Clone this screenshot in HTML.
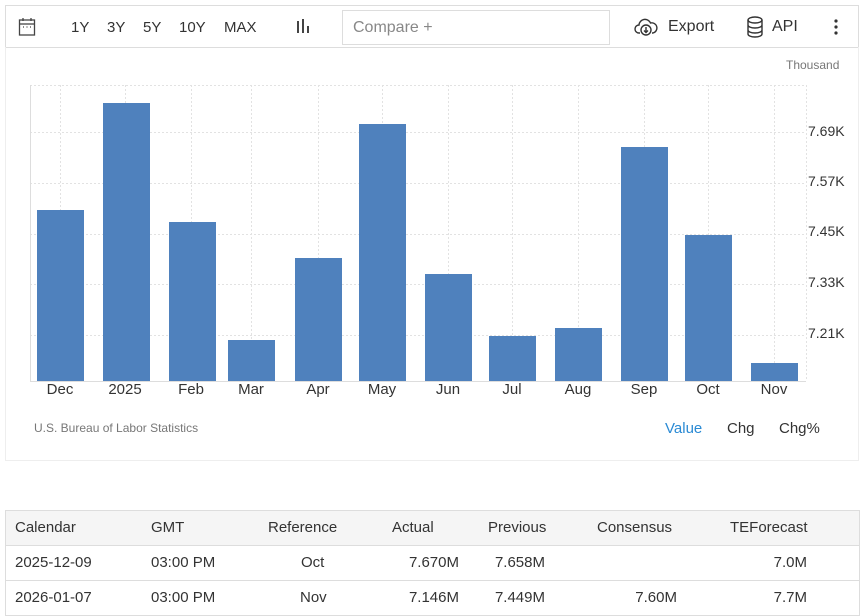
<!DOCTYPE html>
<html><head><meta charset="utf-8"><style>
*{box-sizing:border-box;margin:0;padding:0}
body{width:862px;height:616px;background:#fff;font-family:"Liberation Sans",Arial,sans-serif;position:relative;overflow:hidden;color:#333}
.abs{position:absolute}
.tb{left:5px;top:5px;width:854px;height:43px;border:1px solid #ddd;background:#fff}
.tb span{position:absolute;top:13px;font-size:15px;color:#333}
.card{left:5px;top:47px;width:854px;height:414px;border:1px solid #eee;border-top:none}
.bar{position:absolute;background:#4f81bd;width:47px}
.xl{position:absolute;top:381px;font-size:15px;color:#333;width:60px;text-align:center}
.yl{position:absolute;left:808px;font-size:14px;color:#333}
.row{position:absolute;left:5px;width:855px;height:36px;border:1px solid #ddd;font-size:15px;color:#333}
.row div{position:absolute;top:8px}
.r{text-align:right}
</style></head><body>
<div class="abs tb">
<svg class="abs" style="left:12px;top:11px" width="18" height="20" viewBox="0 0 18 20" fill="none" stroke="#444" stroke-width="1.3"><rect x="1.5" y="3" width="15" height="15"/><line x1="1.5" y1="7" x2="16.5" y2="7"/><line x1="5" y1="1" x2="5" y2="4"/><line x1="13" y1="1" x2="13" y2="4"/><line x1="5" y1="10" x2="6" y2="10"/><line x1="8.5" y1="10" x2="9.5" y2="10"/><line x1="12" y1="10" x2="13" y2="10"/></svg>
<span style="left:65px">1Y</span><span style="left:101px">3Y</span><span style="left:137px">5Y</span><span style="left:173px">10Y</span><span style="left:218px">MAX</span>
<svg class="abs" style="left:289px;top:12px" width="16" height="16" viewBox="0 0 16 16" stroke="#444" stroke-width="2"><line x1="3" y1="3" x2="3" y2="15"/><line x1="8" y1="1" x2="8" y2="15"/><line x1="13" y1="8" x2="13" y2="15"/></svg>
<div class="abs" style="left:336px;top:4px;width:268px;height:35px;border:1px solid #ddd"></div>
<span style="left:347px;color:#888;font-size:16px;top:13px">Compare +</span>
<svg class="abs" style="left:628px;top:10px" width="24" height="22" viewBox="0 0 24 22" fill="none" stroke="#333" stroke-width="1.4"><path d="M6 17H5a4 4 0 0 1 0-8 6 6 0 0 1 11.5-2A4.5 4.5 0 0 1 19 17h-1"/><circle cx="12" cy="14" r="5"/><path d="M12 11v5M10 14.5l2 2 2-2"/></svg>
<span style="left:662px;font-size:16px;top:12px">Export</span>
<svg class="abs" style="left:740px;top:10px" width="18" height="22" viewBox="0 0 18 22" fill="none" stroke="#333" stroke-width="1.4"><ellipse cx="9" cy="4" rx="7" ry="3"/><path d="M2 4v14c0 1.7 3 3 7 3s7-1.3 7-3V4M2 9c0 1.7 3 3 7 3s7-1.3 7-3M2 14c0 1.7 3 3 7 3s7-1.3 7-3"/></svg>
<span style="left:766px;font-size:16px;top:12px">API</span>
<svg class="abs" style="left:828px;top:13px" width="4" height="16"><circle cx="2" cy="2" r="1.6" fill="#333"/><circle cx="2" cy="8" r="1.6" fill="#333"/><circle cx="2" cy="14" r="1.6" fill="#333"/></svg>
</div>
<div class="abs card"></div>
<div class="abs" style="left:786px;top:58px;font-size:12px;color:#777">Thousand</div>
<svg class="abs" style="left:0;top:0" width="862" height="400">
<g stroke="#e2e2e2" stroke-dasharray="2,2" stroke-width="1">
<line x1="30" y1="85.5" x2="806" y2="85.5"/><line x1="30" y1="132.5" x2="806" y2="132.5"/><line x1="30" y1="183.5" x2="806" y2="183.5"/><line x1="30" y1="234.5" x2="806" y2="234.5"/><line x1="30" y1="284.5" x2="806" y2="284.5"/><line x1="30" y1="335.5" x2="806" y2="335.5"/>
<line x1="60.5" y1="85" x2="60.5" y2="381"/><line x1="125.5" y1="85" x2="125.5" y2="381"/><line x1="191.5" y1="85" x2="191.5" y2="381"/><line x1="251.5" y1="85" x2="251.5" y2="381"/><line x1="318.5" y1="85" x2="318.5" y2="381"/><line x1="382.5" y1="85" x2="382.5" y2="381"/><line x1="448.5" y1="85" x2="448.5" y2="381"/><line x1="512.5" y1="85" x2="512.5" y2="381"/><line x1="578.5" y1="85" x2="578.5" y2="381"/><line x1="644.5" y1="85" x2="644.5" y2="381"/><line x1="708.5" y1="85" x2="708.5" y2="381"/><line x1="774.5" y1="85" x2="774.5" y2="381"/><line x1="806.5" y1="85" x2="806.5" y2="381"/>
</g>
<line x1="30.5" y1="85" x2="30.5" y2="381" stroke="#ddd"/>
<line x1="30" y1="381.5" x2="806" y2="381.5" stroke="#ddd"/>
</svg>
<div class="bar" style="left:37px;top:210px;height:171px"></div>
<div class="bar" style="left:103px;top:103px;height:278px"></div>
<div class="bar" style="left:169px;top:222px;height:159px"></div>
<div class="bar" style="left:228px;top:340px;height:41px"></div>
<div class="bar" style="left:295px;top:258px;height:123px"></div>
<div class="bar" style="left:359px;top:124px;height:257px"></div>
<div class="bar" style="left:425px;top:274px;height:107px"></div>
<div class="bar" style="left:489px;top:336px;height:45px"></div>
<div class="bar" style="left:555px;top:328px;height:53px"></div>
<div class="bar" style="left:621px;top:147px;height:234px"></div>
<div class="bar" style="left:685px;top:235px;height:146px"></div>
<div class="bar" style="left:751px;top:363px;height:18px"></div>
<div class="xl" style="left:30px">Dec</div><div class="xl" style="left:95px">2025</div><div class="xl" style="left:161px">Feb</div><div class="xl" style="left:221px">Mar</div><div class="xl" style="left:288px">Apr</div><div class="xl" style="left:352px">May</div><div class="xl" style="left:418px">Jun</div><div class="xl" style="left:482px">Jul</div><div class="xl" style="left:548px">Aug</div><div class="xl" style="left:614px">Sep</div><div class="xl" style="left:678px">Oct</div><div class="xl" style="left:744px">Nov</div>
<div class="yl" style="top:123px">7.69K</div><div class="yl" style="top:173px">7.57K</div><div class="yl" style="top:223px">7.45K</div><div class="yl" style="top:274px">7.33K</div><div class="yl" style="top:325px">7.21K</div>
<div class="abs" style="left:34px;top:421px;font-size:12px;color:#777">U.S. Bureau of Labor Statistics</div>
<div class="abs" style="left:665px;top:420px;font-size:15px;color:#2a8ad4">Value</div>
<div class="abs" style="left:727px;top:420px;font-size:15px">Chg</div>
<div class="abs" style="left:779px;top:420px;font-size:15px">Chg%</div>

<div class="row" style="top:510px;background:#f5f5f5">
<div style="left:9px">Calendar</div><div style="left:145px">GMT</div><div style="left:262px">Reference</div><div style="left:386px">Actual</div><div style="left:482px">Previous</div><div style="left:591px">Consensus</div><div style="left:724px">TEForecast</div>
</div>
<div class="row" style="top:545px">
<div style="left:9px">2025-12-09</div><div style="left:145px">03:00 PM</div><div style="left:295px">Oct</div><div class="r" style="right:400px">7.670M</div><div class="r" style="right:314px">7.658M</div><div class="r" style="right:52px">7.0M</div>
</div>
<div class="row" style="top:580px">
<div style="left:9px">2026-01-07</div><div style="left:145px">03:00 PM</div><div style="left:294px">Nov</div><div class="r" style="right:400px">7.146M</div><div class="r" style="right:314px">7.449M</div><div class="r" style="right:182px">7.60M</div><div class="r" style="right:52px">7.7M</div>
</div>
</body></html>
